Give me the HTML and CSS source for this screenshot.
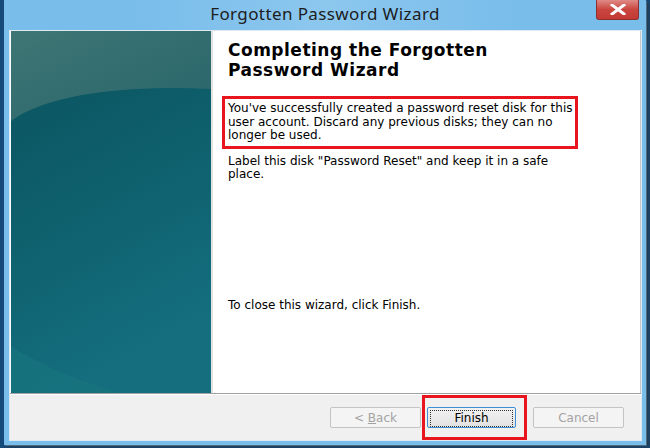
FILE: index.html
```html
<!DOCTYPE html>
<html>
<head>
    <link rel="stylesheet" href="styles.css">
</head>
<body>
<div class="window">
    <div class="titlebar">
        <span class="title">Forgotten Password Wizard</span>
        <button class="close" aria-label="Close">
            <svg width="16" height="11" viewBox="0 0 16 11">
                <path d="M2,1 L14,10 M14,1 L2,10" stroke="#fff" stroke-width="3" stroke-linecap="square"/>
            </svg>
        </button>
    </div>
    <div class="client">
        <div class="main">
            <div class="side">
                <!-- боковая картинка мастера -->
                <svg width="200" height="362" viewBox="0 0 200 362">
                    <defs>
                        <linearGradient id="deep" x1="0" y1="0" x2="0.3" y2="1">
                            <stop offset="0" stop-color="#0a525d"/>
                            <stop offset="0.5" stop-color="#0e5f6c"/>
                            <stop offset="1" stop-color="#146e7e"/>
                        </linearGradient>
                        <linearGradient id="glow" x1="0" y1="0" x2="1" y2="1">
                            <stop offset="0" stop-color="#3f7675"/>
                            <stop offset="1" stop-color="#27646a"/>
                        </linearGradient>
                    </defs>
                    <rect width="200" height="362" fill="url(#deep)"/>
                    <path d="M0,0 H200 V58 C130,54 40,60 0,90 Z" fill="url(#glow)"/>
                    <path d="M0,315 C30,335 70,350 110,362 H0 Z" fill="#18777f" opacity="0.6"/>
                </svg>
            </div>
            <div class="content">
                <h1>Completing the Forgotten Password Wizard</h1>
                <p class="marked">You've successfully created a password reset disk for this user account. Discard any previous disks; they can no longer be used.</p>
                <p>Label this disk "Password Reset" and keep it in a safe place.</p>
                <p class="closing">To close this wizard, click Finish.</p>
            </div>
        </div>
        <div class="footer">
            <button class="btn" disabled>&lt; <u>B</u>ack</button>
            <button class="btn default"><span>Finish</span></button>
            <button class="btn cancel" disabled>Cancel</button>
            <div class="mark-finish"></div>
        </div>
    </div>
</div>
</body>
</html>
```

FILE: styles.css
```css
body {
    margin: 0;
    height: 448px;
    background-color: #164a7a;
    overflow: hidden;
}

.window {
    margin-left: 4px;
    width: 642px;
    height: 445px;
    background-color: #79bdeb;
    box-shadow: 1px 1px 0 #4d6c83, 3px 2px 3px #253b4c;
    display: flex;
    flex-direction: column;
}

.titlebar {
    position: relative;
    height: 30px;
    display: flex;
    align-items: center;
    justify-content: center;
    background: linear-gradient(90deg, #79bdeb 20%, #8cc7ee 50%, #79bdeb 80%);
}

.title {
    font-family: "Noto Sans", sans-serif;
    font-size: 17px;
    letter-spacing: 0.4px;
    color: #1c1c1c;
    margin-top: -3px;
}

.close {
    position: absolute;
    right: 7px;
    top: 0;
    width: 43px;
    height: 20px;
    padding: 0;
    border: 1px solid #8e3030;
    border-top: none;
    border-radius: 0 0 3px 3px;
    background: linear-gradient(#e08a86, #c9463f 50%, #c23a33);
    display: flex;
    align-items: center;
    justify-content: center;
}

.client {
    margin-left: 5px;
    width: 631px;
    height: 409px;
    border: 1px solid #dfe9f1;
    background-color: #f0f0f0;
    display: flex;
    flex-direction: column;
}

.main {
    height: 362px;
    display: flex;
    background-color: #fff;
    border-right: 1px solid #c8c8c8;
}

.side {
    width: 200px;
    height: 362px;
    border-left: 1px solid #fafafa;
}

.side svg {
    display: block;
}

.content {
    flex: 1;
    border-left: 2px solid #e2e2e2;
    padding: 9px 14px 0 15px;
    font-family: "DejaVu Sans", sans-serif;
    font-size: 12px;
    line-height: 13.5px;
    color: #000;
}

h1 {
    margin: 0 0 16px;
    width: 320px;
    font-size: 17px;
    letter-spacing: 0.5px;
    line-height: 20px;
    font-weight: bold;
}

p {
    margin: 0 0 13px;
    width: 345px;
}

.marked {
    margin: 0 0 6px -6px;
    padding: 3px 0 3px 3px;
    width: 347px;
    border: 3px solid #e8141e;
}

.closing {
    margin-top: 117px;
}

.footer {
    position: relative;
    flex: 1;
    border-top: 1px solid #a0a0a0;
    box-shadow: inset 0 1px 0 #fff;
    display: flex;
    align-items: flex-start;
    padding: 13px 0 0 320px;
}

.btn {
    width: 91px;
    height: 21px;
    padding: 0;
    font-family: "DejaVu Sans", sans-serif;
    font-size: 12px;
    color: #000;
    background-color: #f2f2f2;
    border: 1px solid #acacac;
    border-radius: 2px;
}

.btn:disabled {
    color: #a3a3a3;
    border-color: #c4c4c4;
    background-color: #f4f4f4;
}

.btn.default {
    margin-left: 6px;
    width: 89px;
    padding: 2px;
    border-color: #3c8fd6;
    background: linear-gradient(#f2f2f2, #e2e2e2);
}

.btn.default span {
    display: block;
    height: 15px;
    line-height: 15px;
    border: 1px dotted #333;
}

.btn.cancel {
    margin-left: 17px;
}

.mark-finish {
    position: absolute;
    left: 412px;
    top: 1px;
    width: 99px;
    height: 39px;
    border: 3px solid #e8141e;
}
```
